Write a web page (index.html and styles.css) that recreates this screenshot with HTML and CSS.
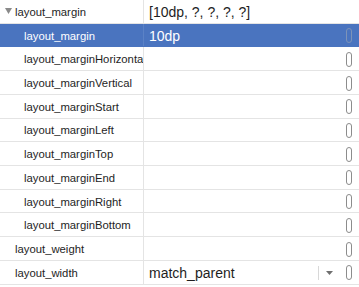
FILE: index.html
```html
<!DOCTYPE html>
<html lang="en">
  <head>
    <meta charset="UTF-8" />
    <title>Attributes</title>
    <link rel="stylesheet" href="styles.css">
  </head>
  <body>
    <div class="table">
      <div class="row">
        <div class="name top">
          <svg class="caret" width="7" height="6" viewBox="0 0 7 6"><path d="M0 0 H7 L3.5 6 Z" fill="#8a8a8a"/></svg>
          <span>layout_margin</span>
        </div>
        <div class="value big">[10dp, ?, ?, ?, ?]</div>
      </div>
      <div class="row selected">
        <div class="name child">layout_margin</div>
        <div class="value big">10dp<span class="flag"></span></div>
      </div>
      <div class="row">
        <div class="name child">layout_marginHorizontal</div>
        <div class="value"><span class="flag"></span></div>
      </div>
      <div class="row">
        <div class="name child">layout_marginVertical</div>
        <div class="value"><span class="flag"></span></div>
      </div>
      <div class="row">
        <div class="name child">layout_marginStart</div>
        <div class="value"><span class="flag"></span></div>
      </div>
      <div class="row">
        <div class="name child">layout_marginLeft</div>
        <div class="value"><span class="flag"></span></div>
      </div>
      <div class="row">
        <div class="name child">layout_marginTop</div>
        <div class="value"><span class="flag"></span></div>
      </div>
      <div class="row">
        <div class="name child">layout_marginEnd</div>
        <div class="value"><span class="flag"></span></div>
      </div>
      <div class="row">
        <div class="name child">layout_marginRight</div>
        <div class="value"><span class="flag"></span></div>
      </div>
      <div class="row">
        <div class="name child">layout_marginBottom</div>
        <div class="value"><span class="flag"></span></div>
      </div>
      <div class="row">
        <div class="name top">layout_weight</div>
        <div class="value"><span class="flag"></span></div>
      </div>
      <div class="row">
        <div class="name top">layout_width</div>
        <div class="value big">match_parent
          <span class="dropdown">
            <svg width="7" height="4" viewBox="0 0 7 4"><path d="M0 0 H7 L3.5 4 Z" fill="#6f6f6f"/></svg>
          </span>
          <span class="flag"></span>
        </div>
      </div>
    </div>
  </body>
</html>
```

FILE: styles.css
```css
body {
  margin: 0;
  padding: 0;
  background: #fff;
  font-family: "Liberation Sans", Arial, sans-serif;
  color: #1e1e1e;
  overflow: hidden;
}
.table {
  width: 359px;
}
.row {
  display: flex;
  height: 23.72px;
  border-bottom: 1px solid #e4e4e4;
  box-sizing: border-box;
  padding-top: 1px;
}
.row.selected {
  background: #4a74bf;
  color: #fff;
  border-bottom-color: #4a74bf;
}
.name {
  width: 144px;
  flex: none;
  box-sizing: border-box;
  border-right: 1px solid #e4e4e4;
  margin-top: -1px;
  padding-top: 1px;
  font-size: 11.3px;
  display: flex;
  align-items: center;
  white-space: nowrap;
  overflow: hidden;
}
.selected .name {
  border-right-color: #5b82c6;
}
.name.top {
  padding-left: 15px;
}
.name.child {
  padding-left: 24px;
}
.caret {
  margin-left: -10px;
  margin-right: 3px;
  margin-top: -1px;
}
.value {
  flex: 1;
  display: flex;
  align-items: center;
  padding-left: 5px;
  padding-right: 7px;
  font-size: 12px;
  white-space: nowrap;
}
.value.big {
  font-size: 14px;
}
.flag {
  margin-left: auto;
  width: 4px;
  height: 13px;
  border: 1px solid #8c8c8c;
  border-radius: 3px;
}
.selected .flag {
  border-color: #7d93b8;
}
.dropdown {
  margin-left: auto;
  margin-right: 13px;
  height: 14px;
  padding-left: 7px;
  border-left: 1px solid #d8d8d8;
  display: flex;
  align-items: center;
}
.dropdown + .flag {
  margin-left: 0;
}
```
